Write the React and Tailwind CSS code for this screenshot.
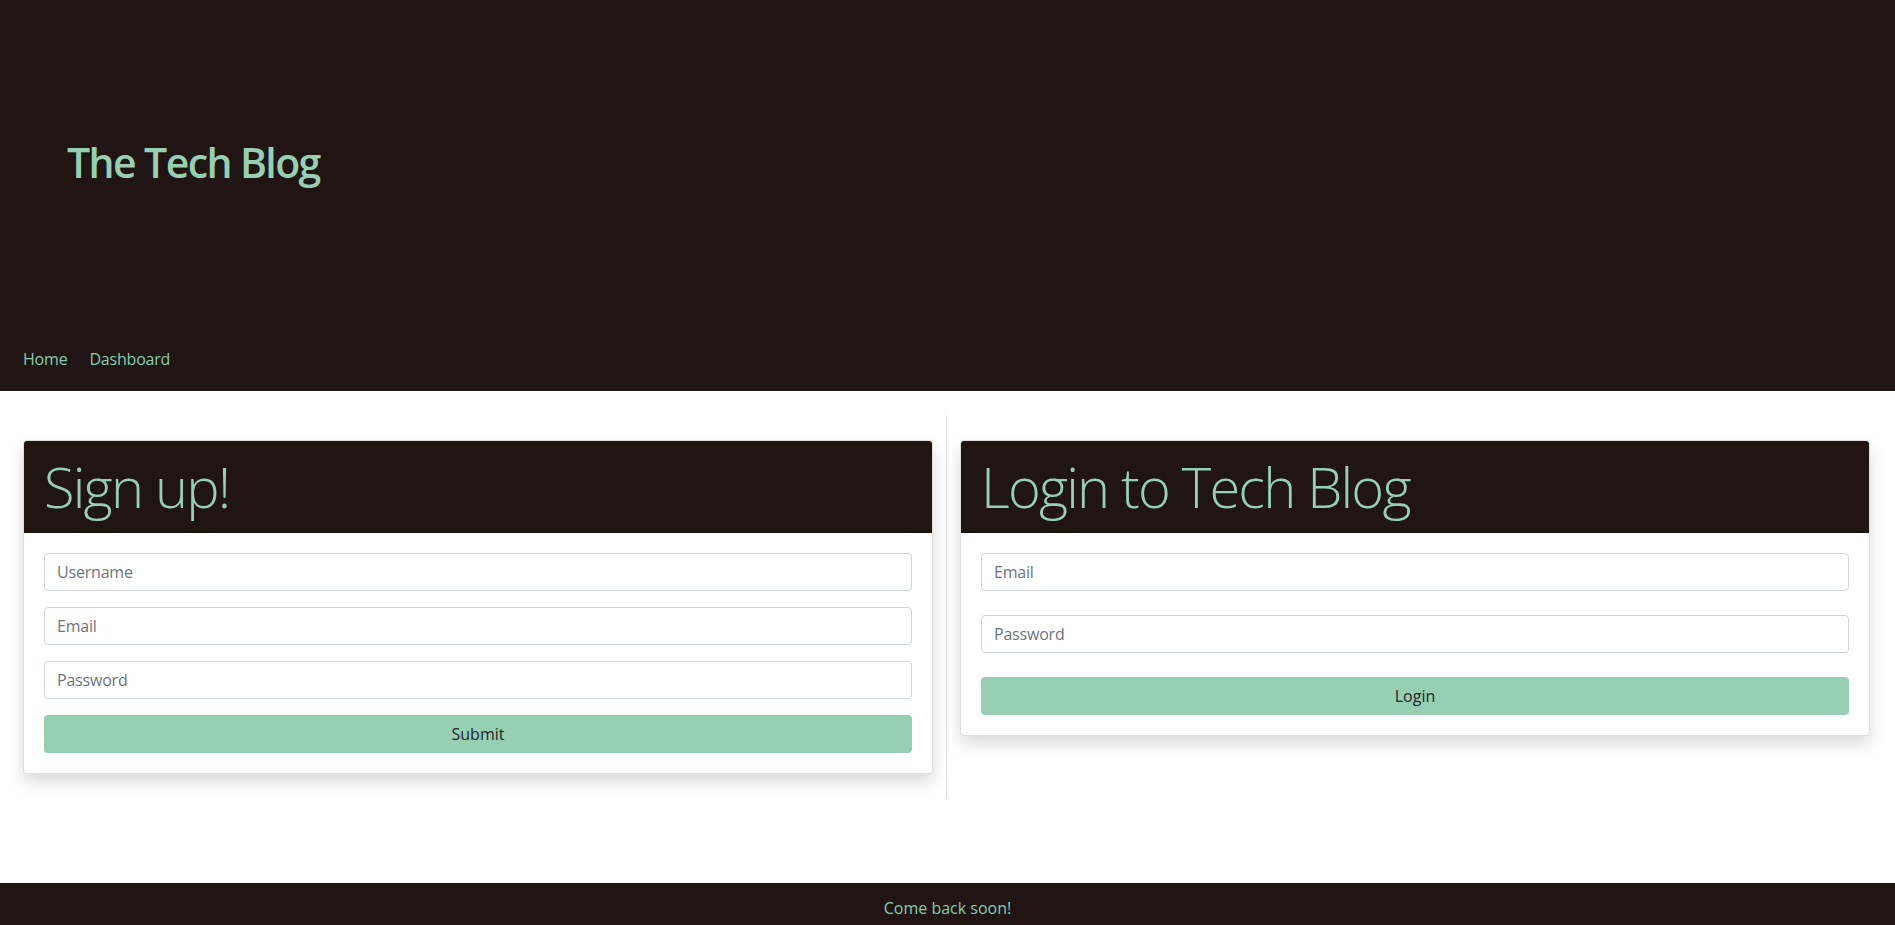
import React from "react";

const font = { fontFamily: '"Open Sans", "Noto Sans", sans-serif' };

function Input({ placeholder, type = "text" }) {
  return (
    <input
      type={type}
      placeholder={placeholder}
      className="block h-[38px] w-full rounded border border-[#ced4da] bg-white px-3 text-base tracking-[-0.2px] text-[#495057] outline-none placeholder:text-[#6c757d]"
    />
  );
}

function Card({ title, children }) {
  return (
    <div className="overflow-hidden rounded border border-black/[.125] bg-white shadow-[0_8px_16px_rgba(0,0,0,0.15)]">
      <div className="border-b border-black/[.125] bg-[#201512] px-5 py-3">
        <h2 className="text-[56px] font-light leading-[1.2] tracking-[-1.8px] text-[#97cfb3]">{title}</h2>
      </div>
      {children}
    </div>
  );
}

function Button({ children }) {
  return (
    <button className="block h-[38px] w-full rounded bg-[#97cfb3] text-base text-[#212529]">
      {children}
    </button>
  );
}

export default function App() {
  return (
    <div className="flex min-h-screen flex-col bg-white" style={font}>
      <header className="flex h-[391px] flex-col bg-[#201512]">
        <div className="flex-1 pl-[67px] pt-[138px]">
          <h1 className="text-[41px] font-semibold leading-[1.2] tracking-[-1.6px] text-[#97cfb3]">The Tech Blog</h1>
        </div>
        <nav className="flex gap-[22px] pb-[20px] pl-[23px] text-base leading-6 tracking-[-0.2px] text-[#86cdb3]">
          <a href="#">Home</a>
          <a href="#">Dashboard</a>
        </nav>
      </header>

      <main className="flex-1">
        <div className="mt-[24px] flex pl-[23px] pr-[25px]">
          <div className="flex-1 py-[25px]">
            <Card title="Sign up!">
              <div className="flex flex-col gap-4 p-5">
                <Input placeholder="Username" />
                <Input placeholder="Email" />
                <Input placeholder="Password" type="password" />
                <Button>Submit</Button>
              </div>
            </Card>
          </div>
          <div className="mx-[13px] w-px bg-[#dee2e6]" />
          <div className="flex-1 py-[25px]">
            <Card title="Login to Tech Blog">
              <div className="flex flex-col gap-6 p-5">
                <Input placeholder="Email" />
                <Input placeholder="Password" type="password" />
                <Button>Login</Button>
              </div>
            </Card>
          </div>
        </div>
      </main>

      <footer className="flex h-[42px] items-center justify-center bg-[#201512] pt-[7px] text-base text-[#86cdb3]">
        Come back soon!
      </footer>
    </div>
  );
}
